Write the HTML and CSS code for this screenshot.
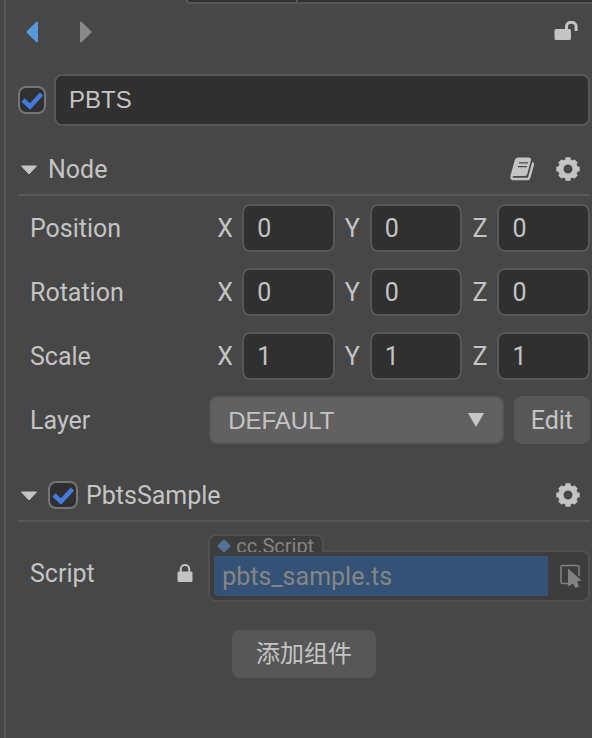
FILE: index.html
```html
<!DOCTYPE html>
<html lang="zh">
<head>
<meta charset="utf-8">
<meta name="viewport" content="width=device-width, initial-scale=1">
<title>Inspector</title>
<link rel="stylesheet" href="styles.css">
</head>
<body>
<div class="tabstrip"><span class="tab"></span></div>
<main class="panel">
  <header class="toolbar">
    <button class="icon-btn back" type="button" aria-label="Back"><svg width="14" height="22" viewBox="0 0 14 22"><path d="M1.500 11 L11 1.500 V20.500 Z" fill="#5898db" stroke="#5898db" stroke-width="2" stroke-linejoin="round"/></svg></button>
    <button class="icon-btn" type="button" aria-label="Forward"><svg width="14" height="22" viewBox="0 0 14 22"><path d="M12.500 11 L3 1.500 V20.500 Z" fill="#888" stroke="#888" stroke-width="2" stroke-linejoin="round"/></svg></button>
    <button class="icon-btn end" type="button" aria-label="Lock inspector"><svg width="24" height="22" viewBox="0 0 24 22"><rect x=".5" y="8" width="16.500" height="11" rx="1.500" fill="#c4c4c4"/><path d="M12.500 9 V5.500 A4.800 4.300 0 0 1 22.100 5.500 V10" fill="none" stroke="#c4c4c4" stroke-width="3"/></svg></button>
  </header>

  <div class="name-row">
    <input class="check" type="checkbox" checked aria-label="Node enabled">
    <input class="field name" type="text" value="PBTS" aria-label="Node name">
  </div>

  <section>
    <div class="section-head">
      <button class="icon-btn" type="button" aria-label="Collapse Node"><svg width="18" height="12" viewBox="0 0 18 12"><path d="M1.500 3 H16.500 L9 11 Z" fill="#c4c4c4" stroke="#c4c4c4" stroke-linejoin="round"/></svg></button>
      <h2>Node</h2>
      <button class="icon-btn end" type="button" aria-label="Help"><svg width="24" height="24" viewBox="0 0 24 24"><path d="M8 .5 H18.500 Q21.500 .5 21 3 L17.300 17 Q16.800 19 15 19 H4.500 Q2.500 19 2.500 20 Q2.500 20.800 3.500 20.800 H17 Q18 20.800 18.300 19.500 L22.200 5 Q24.500 5.500 24 8 L20.500 20.500 Q19.700 23.300 17.500 23.300 H3.500 Q-.5 23.300 .5 18.500 L4.800 3 Q5.500 .5 8 .5 Z" fill="#c4c4c4"/><path d="M9 5.800 H18 M8 9.700 H17" stroke="#474747" stroke-width="1.300"/></svg></button>
      <button class="icon-btn" type="button" aria-label="Node settings"><svg width="24" height="24" viewBox="0 0 24 24"><use href="#gear"/></svg></button>
    </div>
    <div class="rows">
      <div class="row"><span class="label">Position</span><div class="vector">
        <label><span>X</span><input class="field" value="0"></label><label><span>Y</span><input class="field" value="0"></label><label><span>Z</span><input class="field" value="0"></label></div></div>
      <div class="row"><span class="label">Rotation</span><div class="vector">
        <label><span>X</span><input class="field" value="0"></label><label><span>Y</span><input class="field" value="0"></label><label><span>Z</span><input class="field" value="0"></label></div></div>
      <div class="row"><span class="label">Scale</span><div class="vector">
        <label><span>X</span><input class="field" value="1"></label><label><span>Y</span><input class="field" value="1"></label><label><span>Z</span><input class="field" value="1"></label></div></div>
      <div class="row"><label class="label" for="layer">Layer</label><div class="layer">
        <div class="select-wrap"><select id="layer"><option>DEFAULT</option></select><svg class="arrow" width="16" height="14" viewBox="0 0 16 14"><path d="M0 0 H16 L8 14 Z" fill="#c6c6c6"/></svg></div>
        <button class="button" type="button">Edit</button></div></div>
    </div>
  </section>

  <section class="component">
    <div class="section-head">
      <button class="icon-btn" type="button" aria-label="Collapse PbtsSample"><svg width="18" height="12" viewBox="0 0 18 12"><path d="M1.500 3 H16.500 L9 11 Z" fill="#c4c4c4" stroke="#c4c4c4" stroke-linejoin="round"/></svg></button>
      <input class="check" id="pbts" type="checkbox" checked>
      <h2><label for="pbts">PbtsSample</label></h2>
      <button class="icon-btn end" type="button" aria-label="PbtsSample settings"><svg width="24" height="24" viewBox="0 0 24 24"><use href="#gear"/></svg></button>
    </div>
    <div class="row script-row">
      <label class="label" for="script">Script</label>
      <svg class="lock" width="16" height="18" viewBox="0 0 16 18"><rect x=".5" y="7.500" width="15" height="10.500" rx="1.500" fill="#c4c4c4"/><path d="M3.800 8 V5 A4.200 4 0 0 1 12.200 5 V8" fill="none" stroke="#c4c4c4" stroke-width="2"/></svg>
      <div class="asset">
        <div class="asset-type"><svg width="14" height="14" viewBox="0 0 14 14"><path d="M7 1.500 L12.500 7 L7 12.500 L1.500 7 Z" fill="#54709a" stroke="#54709a" stroke-width="2" stroke-linejoin="round"/></svg><span>cc.Script</span></div>
        <div class="asset-box">
          <input id="script" value="pbts_sample.ts" readonly>
          <button class="icon-btn" type="button" aria-label="Pick asset"><svg width="22" height="24" viewBox="0 0 22 24"><path d="M8 19.500 H2.500 Q1 19.500 1 18 V3 Q1 1.500 2.500 1.500 H17.500 Q19 1.500 19 3 V12" fill="none" stroke="#828282" stroke-width="1.500"/><path d="M8 4.500 L21.500 16.500 L17 17.500 L19 22.500 L15.500 24 L13 19.500 L8 22.500 Z" fill="#828282"/></svg></button>
        </div>
      </div>
    </div>
  </section>
  <button class="button add" type="button">添加组件</button>
</main>
<svg class="symbols" width="0" height="0" aria-hidden="true"><defs><g id="gear"><circle cx="12" cy="12" r="7.200" fill="none" stroke="#c4c4c4" stroke-width="5.400"/><path d="M12 .3 V5 M12 19 V23.700 M.3 12 H5 M19 12 H23.700 M3.900 3.900 L7 7 M17 17 L20.100 20.100 M3.900 20.100 L7 17 M17 7 L20.100 3.900" stroke="#c4c4c4" stroke-width="5"/></g></defs></svg>
</body>
</html>
```
FILE: styles.css
```css
* { box-sizing: border-box; }
body { margin: 0; min-height: 100vh; display: flex; flex-direction: column; background: #474747; color: #c4c4c4; font: 25px/33px Roboto, "Noto Sans CJK SC", sans-serif; }
button, input, select { font: inherit; color: inherit; margin: 0; }
svg { display: block; }
.symbols { position: absolute; }
.tabstrip { height: 4px; margin-left: 186px; border: 2px solid #565656; border-width: 0 0 2px 2px; border-radius: 0 0 0 4px; background: #303030; }
.tab { display: block; width: 110px; height: 2px; border-right: 2px solid #565656; }
.panel { flex: 1; margin: -4px 0 0 4px; border-left: 2px solid #565656; padding: 4px 2px 0 12px; display: flex; flex-direction: column; }
.toolbar { height: 56px; display: flex; align-items: center; gap: 38px; padding: 0 12px 0 8px; }
.icon-btn { padding: 0; border: 0; background: none; }
.end { margin-left: auto; }
.name-row { margin-top: 14px; display: flex; align-items: center; gap: 8px; }
.check { appearance: none; flex: none; width: 28px; height: 28px; border: 2px solid #757575; border-radius: 8px; background: #303030 url("data:image/svg+xml,%3Csvg xmlns='http://www.w3.org/2000/svg' viewBox='0 0 24 24'%3E%3Cpath d='M3 12 L10 18.500 L21.500 6' fill='none' stroke='%23437bdf' stroke-width='4.500'/%3E%3C/svg%3E") center / 24px; }
.component .check { width: 30px; }
.field { min-width: 0; width: 100%; height: 48px; padding: 0 13px; border: 2px solid #575757; border-radius: 8px; background: #303030; outline: 0; }
.name { height: 52px; font: 24px "Liberation Sans", sans-serif; }
.section-head { height: 52px; display: flex; align-items: center; gap: 10px; padding: 0 10px 0 2px; border-bottom: 2px solid #575757; }
.name-row + section { margin-top: 18px; }
h2 { margin: 0; font-size: 25px; font-weight: 400; }
.section-head .end + .icon-btn { margin-left: 12px; }
.rows { padding-top: 8px; display: grid; gap: 16px; }
.row { display: flex; align-items: center; padding-left: 12px; }
.label { flex: 0 0 32%; }
.vector { flex: 1; display: grid; grid-template-columns: repeat(3, 1fr); gap: 10px; padding-left: 8px; }
.vector label { display: flex; align-items: center; }
.vector span { flex: 0 0 25px; }
.layer { flex: 1; display: flex; gap: 10px; }
.select-wrap { position: relative; flex: 1; }
select { appearance: none; width: 100%; height: 48px; padding: 0 17px; border: 2px solid #575757; border-radius: 8px; background: #616161; font: 24px "Liberation Sans", sans-serif; }
.arrow { position: absolute; right: 20px; top: 17px; pointer-events: none; }
.button { height: 48px; padding: 0 17px; border: 0; border-radius: 8px; background: #575757; }
.component { margin-top: 26px; }
.script-row { padding-top: 12px; align-items: flex-end; }
.script-row .label { line-height: 56px; }
.component h2 { margin-left: -2px; }
.lock { margin: 0 16px 20px -32px; }
.asset { flex: 1; margin-left: -1px; }
.asset-type { display: flex; align-items: center; gap: 5px; width: 116px; height: 18px; margin-bottom: -2px; padding: 4px 0 0 7px; position: relative; border: 2px solid #505050; border-bottom: 0; border-radius: 8px 8px 0 0; background: #3d3d3d; color: #858585; font: 20px/20px Roboto, sans-serif; overflow: hidden; }
.asset-box { height: 52px; display: flex; align-items: center; gap: 12px; padding: 4px 6px 4px 4px; border: 2px solid #505050; border-radius: 0 8px 8px 8px; background: #3d3d3d; }
#script { flex: 1; min-width: 0; height: 40px; padding: 0 8px; border: 0; border-radius: 0 0 0 4px; background: #345276; color: #858585; outline: 0; }
.add { align-self: center; margin-top: 28px; padding: 0 24px; font-size: 24px; }
```
